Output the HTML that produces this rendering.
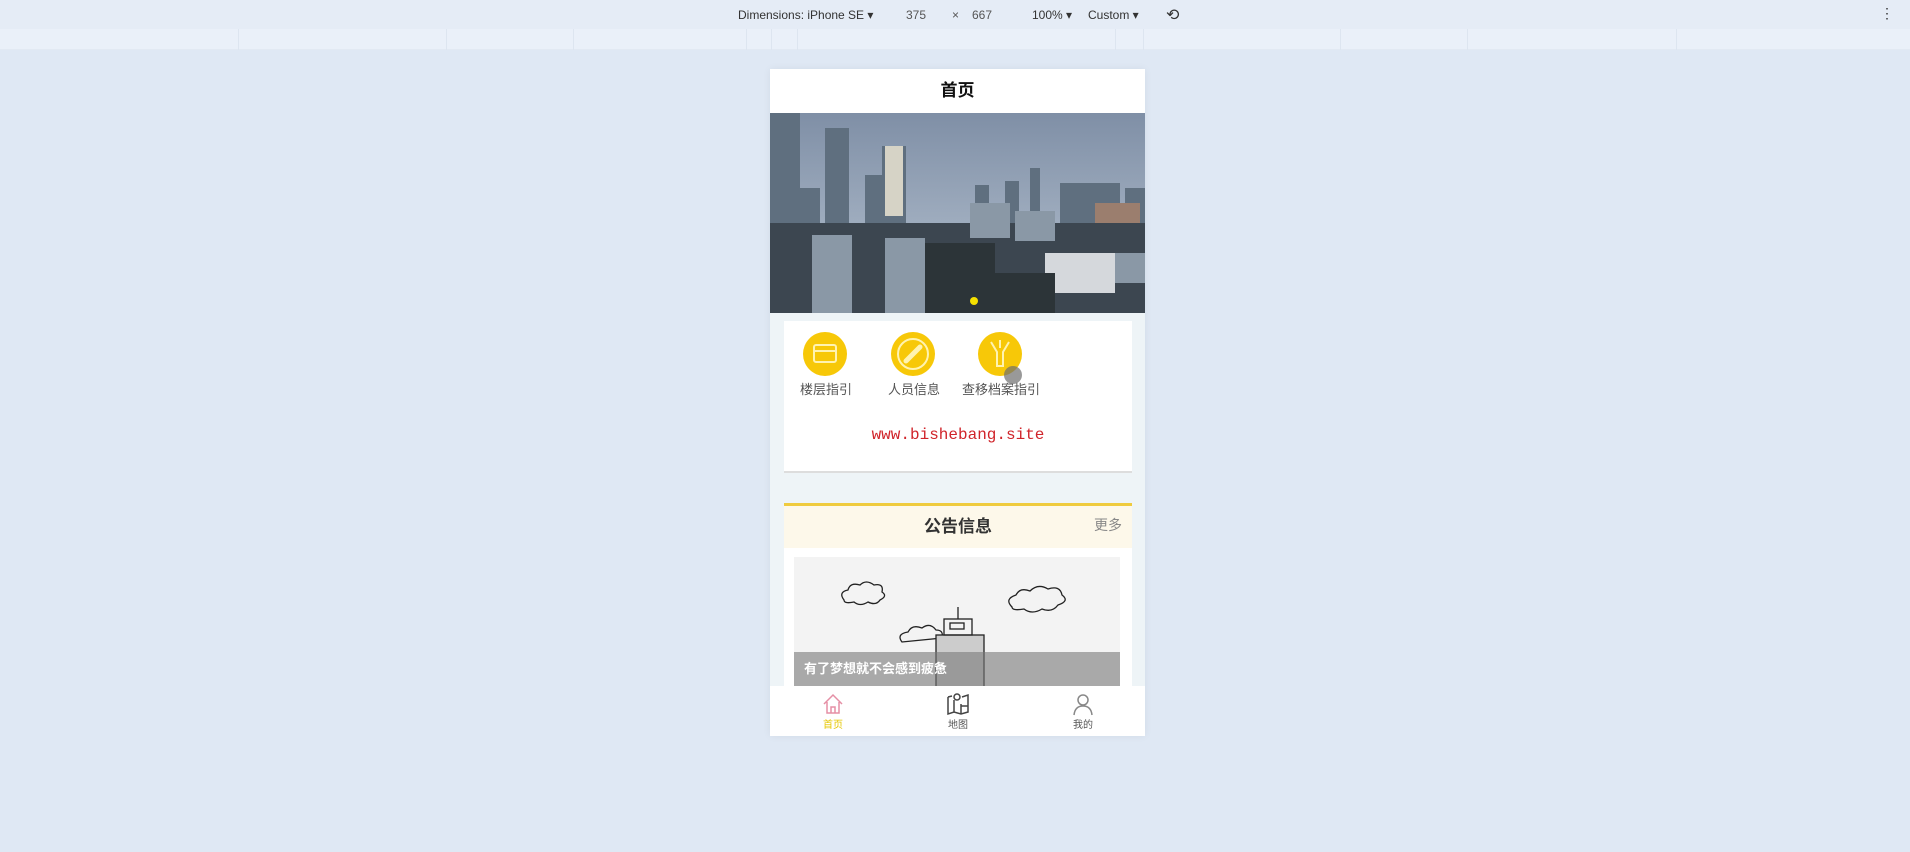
<!DOCTYPE html>
<html><head><meta charset="utf-8"><style>
*{margin:0;padding:0;box-sizing:border-box}
body{width:1910px;height:852px;background:#dfe8f4;font-family:"Liberation Sans","Noto Sans CJK SC",sans-serif;position:relative;overflow:hidden}
.top{position:absolute;left:0;top:0;width:1910px;height:29px;background:#e5ecf6;font-size:12px;color:#333}
.top span{position:absolute;top:8px}
.row2{position:absolute;left:0;top:29px;width:1910px;height:21px;background:#eaf0f9;border-bottom:1px solid #e2e9f3}
.row2 i{position:absolute;top:0;width:1px;height:21px;background:#dde5f0}
.phone{position:absolute;left:770px;top:69px;width:375px;height:667px;background:#eef4f7;overflow:hidden;box-shadow:0 0 8px rgba(0,0,0,.06)}
.hdr{position:absolute;left:0;top:0;width:375px;height:44px;background:#fff;text-align:center;font-size:17px;font-weight:bold;line-height:44px;color:#111}
.ban{position:absolute;left:0;top:44px;width:375px;height:200px}
.card{position:absolute;left:14px;top:252px;width:348px;height:152px;background:#fff;border-bottom:2px solid #ddd}
.ic{position:absolute;top:11px;width:44px;height:44px;border-radius:50%;background:#f7c808}
.lb{position:absolute;top:58px;font-size:13px;color:#555;width:90px;text-align:center}
.wm{position:absolute;left:0;width:348px;top:105px;text-align:center;font-family:"Liberation Mono",monospace;font-size:16px;color:#d0242a}
.nt{position:absolute;left:14px;top:434px;width:348px;height:3px;background:#efcb3e}
.nh{position:absolute;left:14px;top:437px;width:348px;height:42px;background:#fdf8ea}
.nh b{position:absolute;left:0;width:348px;text-align:center;top:6px;font-size:17px;color:#333}
.nh span{position:absolute;right:10px;top:9px;font-size:14px;color:#888}
.nb{position:absolute;left:14px;top:479px;width:348px;height:140px;background:#fff}
.img{position:absolute;left:24px;top:488px;width:326px;height:130px;background:#f3f3f3;overflow:hidden}
.ov{position:absolute;left:0;top:95px;width:326px;height:40px;background:rgba(120,120,120,.6);color:#fff;font-size:13px;font-weight:bold;padding:6px 10px}
.tab{position:absolute;left:0;top:617px;width:375px;height:50px;background:#fff}
.tab div{position:absolute;top:2px;width:80px;text-align:center;font-size:10px;color:#555}
.tab svg{display:block;margin:4px auto 0}
</style></head><body>
<div class="top">
<span style="left:738px">Dimensions: iPhone SE ▾</span>
<span style="left:906px;color:#555">375</span>
<span style="left:952px;color:#555">×</span>
<span style="left:972px;color:#555">667</span>
<span style="left:1032px">100% ▾</span>
<span style="left:1088px">Custom ▾</span>
<span style="left:1166px;top:5px;font-size:16px">⟲</span>
<span style="left:1880px;top:5px;font-size:14px">⋮</span>
</div>
<div class="row2"><i style="left:238px"></i><i style="left:446px"></i><i style="left:573px"></i><i style="left:746px"></i><i style="left:771px"></i><i style="left:797px"></i><i style="left:1115px"></i><i style="left:1143px"></i><i style="left:1340px"></i><i style="left:1467px"></i><i style="left:1676px"></i></div>
<div class="phone">
<div class="hdr">首页</div>
<svg class="ban" viewBox="0 0 375 200" width="375" height="200">
<defs><linearGradient id="s" x1="0" y1="0" x2="0" y2="1"><stop offset="0" stop-color="#7f8fa6"/><stop offset="1" stop-color="#b8c4d2"/></linearGradient></defs>
<rect width="375" height="200" fill="url(#s)"/>
<g fill="#5f6f7f"><rect x="0" y="0" width="30" height="130"/><rect x="55" y="15" width="24" height="115"/><rect x="112" y="33" width="24" height="100"/><rect x="95" y="62" width="20" height="60"/><rect x="30" y="75" width="20" height="60"/><rect x="205" y="72" width="14" height="40"/><rect x="235" y="68" width="14" height="50"/><rect x="290" y="70" width="60" height="60"/><rect x="260" y="55" width="10" height="60"/><rect x="355" y="75" width="20" height="40"/></g>
<rect x="115" y="33" width="18" height="70" fill="#d6d3c6"/>
<rect x="325" y="90" width="45" height="55" fill="#9b7e6e"/>
<rect x="0" y="110" width="375" height="90" fill="#3c4650"/>
<g fill="#8a98a6"><rect x="42" y="122" width="40" height="78"/><rect x="115" y="125" width="40" height="75"/><rect x="200" y="90" width="40" height="35"/><rect x="245" y="98" width="40" height="30"/><rect x="345" y="140" width="30" height="30"/></g>
<rect x="275" y="140" width="70" height="40" fill="#d5d8dc"/>
<g fill="#2c3438"><rect x="155" y="130" width="70" height="70"/><rect x="225" y="160" width="60" height="40"/></g>
<circle cx="204" cy="188" r="4" fill="#f5e000"/>
</svg>
<div class="card">
<div class="ic" style="left:19px"><svg width="44" height="44"><rect x="11" y="13" width="22" height="17" rx="2" fill="none" stroke="#fff3b0" stroke-width="2"/><line x1="11" y1="19" x2="33" y2="19" stroke="#fff3b0" stroke-width="2"/></svg></div>
<div class="ic" style="left:107px"><svg width="44" height="44"><circle cx="22" cy="22" r="15" fill="none" stroke="#fff3b0" stroke-width="2"/><line x1="15" y1="29" x2="29" y2="15" stroke="#fff3b0" stroke-width="5" stroke-linecap="round"/></svg></div>
<div class="ic" style="left:194px"><svg width="44" height="44"><path d="M13 10 L19 20 V34 H25 V20 L31 10 M22 8 V16" fill="none" stroke="#fff3b0" stroke-width="2"/></svg></div>
<div style="position:absolute;left:220px;top:45px;width:18px;height:18px;border-radius:50%;background:rgba(110,110,110,.7)"></div>
<div class="lb" style="left:-3px">楼层指引</div>
<div class="lb" style="left:85px">人员信息</div>
<div class="lb" style="left:172px">查移档案指引</div>
<div class="wm">www.bishebang.site</div>
</div>
<div class="nt"></div>
<div class="nh"><b>公告信息</b><span>更多</span></div>
<div class="nb"></div>
<div class="img">
<svg width="326" height="130" viewBox="0 0 326 130" fill="none" stroke="#222" stroke-width="1.3">
<path d="M50 43 q-6-8 4-10 q2-8 12-5 q6-6 14 0 q10-2 8 7 q6 4-2 8 q-4 6-12 2 q-8 5-14 0 q-10 2-10-2z"/>
<path d="M218 50 q-8-8 4-12 q4-8 14-4 q8-8 18-2 q12-4 14 6 q8 6-4 10 q-6 8-16 4 q-10 6-18 0 q-12 2-12-2z"/>
<path d="M108 85 q-6-8 6-10 q4-8 14-4 q8-6 14 2 q8 0 6 8z"/>
<rect x="142" y="78" width="48" height="55" fill="#ccc"/><rect x="150" y="62" width="28" height="16"/><rect x="156" y="66" width="14" height="6"/><line x1="164" y1="50" x2="164" y2="62"/>
</svg>
<div class="ov">有了梦想就不会感到疲惫</div>
</div>
<div class="tab">
<div style="left:23px;color:#e6c700"><svg width="24" height="24" viewBox="0 0 24 24" fill="none" stroke="#e58fa5" stroke-width="1.5"><path d="M3 12 L12 3 L21 12 M6 10 V21 H18 V10 M10 21 V15 H14 V21"/></svg>首页</div>
<div style="left:148px"><svg width="24" height="24" viewBox="0 0 24 24" fill="none" stroke="#444" stroke-width="1.5"><path d="M2 5 V22 L8 20 L15 22 L22 20 V3 L16 5 M2 5 L6 4 M8 8 V20 M15 12 V22 M15 14 H22"/><circle cx="11" cy="5" r="3"/></svg>地图</div>
<div style="left:273px"><svg width="24" height="24" viewBox="0 0 24 24" fill="none" stroke="#888" stroke-width="1.5"><circle cx="12" cy="8" r="5"/><path d="M3 23 q1-9 9-9 q8 0 9 9"/></svg>我的</div>
</div>
</div>
</body></html>
